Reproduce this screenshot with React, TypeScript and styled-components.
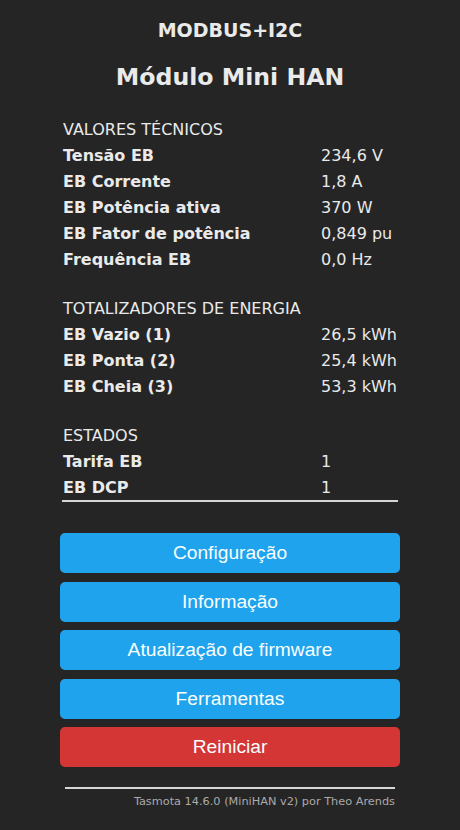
import styled, { createGlobalStyle } from "styled-components";

const GlobalStyle = createGlobalStyle`
  body {
    margin: 0;
    background: #252525;
    color: #eaeaea;
    font-family: "DejaVu Sans", Verdana, sans-serif;
  }
`;

interface ISection {
  title: string;
  rows: [string, string][];
}

const SECTIONS: ISection[] = [
  {
    title: "VALORES TÉCNICOS",
    rows: [
      ["Tensão EB", "234,6 V"],
      ["EB Corrente", "1,8 A"],
      ["EB Potência ativa", "370 W"],
      ["EB Fator de potência", "0,849 pu"],
      ["Frequência EB", "0,0 Hz"],
    ],
  },
  {
    title: "TOTALIZADORES DE ENERGIA",
    rows: [
      ["EB Vazio (1)", "26,5 kWh"],
      ["EB Ponta (2)", "25,4 kWh"],
      ["EB Cheia (3)", "53,3 kWh"],
    ],
  },
  {
    title: "ESTADOS",
    rows: [
      ["Tarifa EB", "1"],
      ["EB DCP", "1"],
    ],
  },
];

const BUTTONS = [
  "Configuração",
  "Informação",
  "Atualização de firmware",
  "Ferramentas",
];

const Page = styled.div`
  width: 340px;
  margin: 0 auto;
  padding-bottom: 20px;
`;

const Header = styled.div`
  text-align: center;
`;

const ModuleName = styled.h3`
  margin: 19px 0 0;
  font-size: 19px;
  line-height: 22px;
  font-weight: bold;
`;

const DeviceName = styled.h2`
  margin: 22px 0 0;
  font-size: 23.6px;
  line-height: 28px;
  font-weight: bold;
`;

const Sensors = styled.div`
  margin: 27px 2px 0;
  border-bottom: 2px solid #d6d6d6;
`;

const Section = styled.div`
  & + & {
    margin-top: 25px;
  }
`;

const SectionTitle = styled.div`
  height: 24px;
  line-height: 24px;
  font-size: 16px;
  padding-left: 1px;
`;

const Row = styled.div`
  display: grid;
  grid-template-columns: 259px 1fr;
  height: 26px;
  align-items: center;
  font-size: 16px;
`;

const Label = styled.span`
  font-weight: bold;
  padding-left: 1px;
`;

const Value = styled.span`
  white-space: nowrap;
`;

const Buttons = styled.div`
  display: flex;
  flex-direction: column;
  gap: 8.5px;
  margin-top: 31px;
`;

const Button = styled.button<{ $danger?: boolean }>`
  height: 40px;
  border: 0;
  border-radius: 5px;
  background: ${(props) => (props.$danger ? "#d43535" : "#1fa3ec")};
  color: #faffff;
  font-family: "Liberation Sans", Arial, sans-serif;
  font-size: 19.2px;
  padding: 0;
  cursor: pointer;
`;

const Footer = styled.div`
  margin: 20px 5px 0;
  text-align: right;
  font-size: 11.3px;
  color: #aaa;
`;

const Rule = styled.hr`
  margin: 0 0 6px;
  border: 0;
  border-top: 2px solid #d6d6d6;
`;

function App() {
  return (
    <Page>
      <GlobalStyle />
      <Header>
        <ModuleName>MODBUS+I2C</ModuleName>
        <DeviceName>Módulo Mini HAN</DeviceName>
      </Header>
      <Sensors>
        {SECTIONS.map((section) => (
          <Section key={section.title}>
            <SectionTitle>{section.title}</SectionTitle>
            {section.rows.map(([label, value]) => (
              <Row key={label}>
                <Label>{label}</Label>
                <Value>{value}</Value>
              </Row>
            ))}
          </Section>
        ))}
      </Sensors>
      <Buttons>
        {BUTTONS.map((text) => (
          <Button key={text}>{text}</Button>
        ))}
        <Button $danger>Reiniciar</Button>
      </Buttons>
      <Footer>
        <Rule />
        Tasmota 14.6.0 (MiniHAN v2) por Theo Arends
      </Footer>
    </Page>
  );
}

export default App;
